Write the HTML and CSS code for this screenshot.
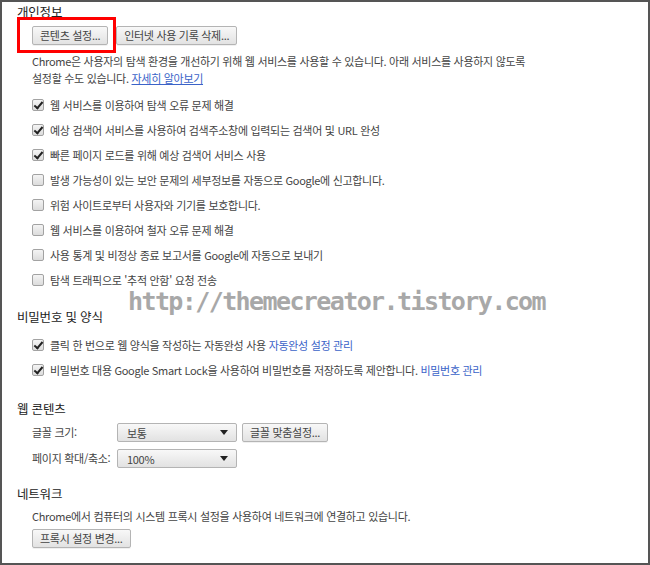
FILE: index.html
```html
<!DOCTYPE html>
<html lang="ko">
<head>
<meta charset="utf-8">
<link rel="stylesheet" href="styles.css">
</head>
<body>
<div class="frame">
  <section class="section first">
    <h3 class="heading">개인정보</h3>
    <div class="btn-row">
      <button class="btn">콘텐츠 설정...</button>
      <button class="btn">인터넷 사용 기록 삭제...</button>
    </div>
    <p class="desc">Chrome은 사용자의 탐색 환경을 개선하기 위해 웹 서비스를 사용할 수 있습니다. 아래 서비스를 사용하지 않도록<br>설정할 수도 있습니다. <a class="link underline">자세히 알아보기</a></p>
    <ul class="checks">
      <li class="check"><span class="box on"></span>웹 서비스를 이용하여 탐색 오류 문제 해결</li>
      <li class="check"><span class="box on"></span>예상 검색어 서비스를 사용하여 검색주소창에 입력되는 검색어 및 URL 완성</li>
      <li class="check"><span class="box on"></span>빠른 페이지 로드를 위해 예상 검색어 서비스 사용</li>
      <li class="check"><span class="box"></span>발생 가능성이 있는 보안 문제의 세부정보를 자동으로 Google에 신고합니다.</li>
      <li class="check"><span class="box"></span>위험 사이트로부터 사용자와 기기를 보호합니다.</li>
      <li class="check"><span class="box"></span>웹 서비스를 이용하여 철자 오류 문제 해결</li>
      <li class="check"><span class="box"></span>사용 통계 및 비정상 종료 보고서를 Google에 자동으로 보내기</li>
      <li class="check"><span class="box"></span>탐색 트래픽으로 '추적 안함' 요청 전송</li>
    </ul>
  </section>

  <section class="section s2">
    <h3 class="heading">비밀번호 및 양식</h3>
    <ul class="checks c2">
      <li class="check"><span class="box on"></span>클릭 한 번으로 웹 양식을 작성하는 자동완성 사용&nbsp;<a class="link">자동완성 설정 관리</a></li>
      <li class="check"><span class="box on"></span>비밀번호 대용 Google Smart Lock을 사용하여 비밀번호를 저장하도록 제안합니다.&nbsp;<a class="link">비밀번호 관리</a></li>
    </ul>
  </section>

  <section class="section s3">
    <h3 class="heading">웹 콘텐츠</h3>
    <div class="form-grid">
      <span class="label">글꼴 크기:</span>
      <div class="control-row">
        <div class="select"><span>보통</span><span class="arrow"></span></div>
        <button class="btn">글꼴 맞춤설정...</button>
      </div>
      <span class="label">페이지 확대/축소:</span>
      <div class="control-row">
        <div class="select"><span>100%</span><span class="arrow"></span></div>
      </div>
    </div>
  </section>

  <section class="section s4">
    <h3 class="heading">네트워크</h3>
    <p class="desc net">Chrome에서 컴퓨터의 시스템 프록시 설정을 사용하여 네트워크에 연결하고 있습니다.</p>
    <button class="btn proxy">프록시 설정 변경...</button>
  </section>

  <div class="highlight"></div>
  <div class="watermark">http://themecreator.tistory.com</div>
</div>
</body>
</html>
```

FILE: styles.css
```css
* { box-sizing: border-box; }
html, body { margin: 0; padding: 0; background: #fff; }
body {
  font-family: "Noto Sans CJK KR", "Noto Sans", sans-serif;
  font-size: 11px;
  letter-spacing: -0.3px;
  color: #444;
}
.frame {
  position: relative;
  width: 650px;
  height: 565px;
  border: 2px solid #555;
  padding: 2px 0 0 15px;
  overflow: hidden;
}
.section { display: flex; flex-direction: column; align-items: flex-start; }
.heading {
  margin: 0;
  font-size: 12.5px;
  font-weight: 400;
  line-height: 16px;
  color: #222;
  letter-spacing: -0.2px;
}
.btn-row { display: flex; gap: 8px; margin: 6px 0 0 15px; }
.btn {
  font-family: inherit;
  font-size: 11px;
  letter-spacing: -0.3px;
  color: #444;
  height: 19px;
  padding: 0 7px;
  line-height: 17px;
  border: 1px solid #b4b4b4;
  border-radius: 2px;
  background: linear-gradient(#f8f8f8, #e2e2e2);
  box-shadow: 0 1px 0 rgba(0,0,0,0.06);
  cursor: default;
}
.desc {
  margin: 8px 0 0 15px;
  line-height: 17px;
}
.link { color: #3b63c8; }
.underline { text-decoration: underline; }
.checks { list-style: none; margin: 5px 0 0 15px; padding: 0; }
.check {
  display: flex;
  align-items: center;
  height: 25px;
  white-space: nowrap;
}
.box {
  width: 12px;
  height: 12px;
  margin-right: 6px;
  border: 1px solid #a2a2a2;
  border-radius: 2px;
  background: linear-gradient(#f4f4f4, #dcdcdc);
  position: relative;
  flex: none;
}
.box.on::after {
  content: "";
  position: absolute;
  left: 3px;
  top: 0px;
  width: 3px;
  height: 7px;
  border: solid #222;
  border-width: 0 2px 2px 0;
  transform: rotate(40deg);
}
.s2 { margin-top: 17px; }
.c2 { margin-top: 7px; }
.s3 { margin-top: 19px; }
.form-grid {
  display: grid;
  grid-template-columns: 85px auto;
  row-gap: 7px;
  margin: 6px 0 0 15px;
  align-items: center;
}
.label { line-height: 19px; white-space: nowrap; }
.control-row { display: flex; gap: 5px; }
.select {
  width: 120px;
  height: 19px;
  display: flex;
  align-items: center;
  justify-content: space-between;
  padding: 0 8px 0 9px;
  border: 1px solid #b4b4b4;
  border-radius: 2px;
  background: linear-gradient(#f8f8f8, #e2e2e2);
  color: #444;
}
.arrow {
  width: 0; height: 0;
  border-left: 4px solid transparent;
  border-right: 4px solid transparent;
  border-top: 5px solid #222;
}
.s4 { margin-top: 18px; }
.net { margin-top: 6px; }
.proxy { margin: 4px 0 0 15px; }
.highlight {
  position: absolute;
  left: 15px;
  top: 15px;
  width: 99px;
  height: 36px;
  border: 3px solid #f00;
}
.watermark {
  position: absolute;
  left: 126px;
  top: 285px;
  font-family: "DejaVu Sans Mono", monospace;
  font-weight: bold;
  font-size: 25px;
  letter-spacing: -1.6px;
  color: #a8a8a8;
  white-space: nowrap;
}
```
